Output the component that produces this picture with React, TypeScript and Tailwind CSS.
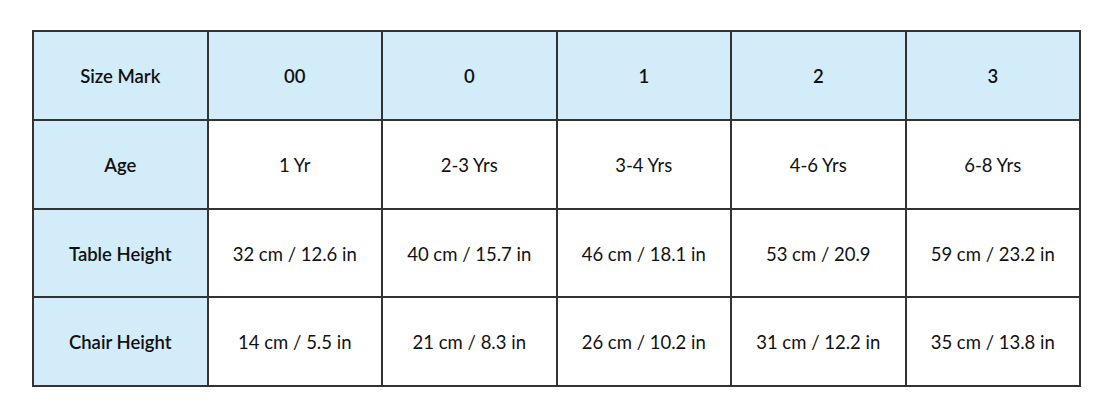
import React from "react";

const header = ["Size Mark", "00", "0", "1", "2", "3"];
const rows: string[][] = [
  ["Age", "1 Yr", "2-3 Yrs", "3-4 Yrs", "4-6 Yrs", "6-8 Yrs"],
  ["Table Height", "32 cm / 12.6 in", "40 cm / 15.7 in", "46 cm / 18.1 in", "53 cm / 20.9", "59 cm / 23.2 in"],
  ["Chair Height", "14 cm / 5.5 in", "21 cm / 8.3 in", "26 cm / 10.2 in", "31 cm / 12.2 in", "35 cm / 13.8 in"],
];

export default function App() {
  return (
    <div className="w-[1113px] h-[417px] bg-white pl-[32px] pt-[30px]" style={{ fontFamily: "Lato, 'Noto Sans', sans-serif" }}>
      <table className="border-collapse w-[1049px] h-[357px] table-fixed text-[18.5px] text-[#111111]">
        <tbody>
          <tr>
            {header.map((h, i) => (
              <td key={i} className="border-2 border-[#333333] bg-[#d3ecfa] text-center align-middle font-semibold pt-[3px]">
                {h}
              </td>
            ))}
          </tr>
          {rows.map((r, ri) => (
            <tr key={ri}>
              {r.map((c, ci) => (
                <td
                  key={ci}
                  className={`border-2 border-[#333333] text-center align-middle pt-[3px] ${ci === 0 ? "bg-[#d3ecfa] font-semibold" : "bg-white"}`}
                >
                  {c}
                </td>
              ))}
            </tr>
          ))}
        </tbody>
      </table>
    </div>
  );
}
